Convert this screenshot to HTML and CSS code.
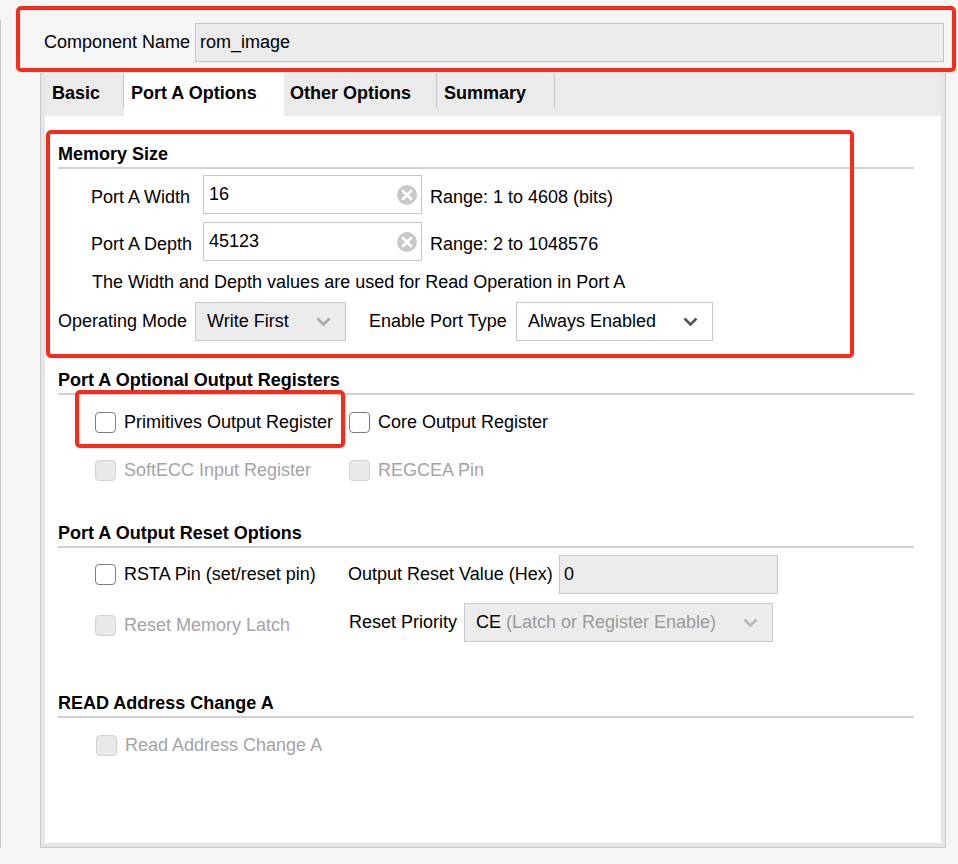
FILE: index.html
```html
<!DOCTYPE html>
<html>
<head>
<meta charset="utf-8">
<link rel="stylesheet" href="styles.css">
</head>
<body>
<div class="window">
  <div class="edge"></div>
  <div class="main">
    <div class="name-row">
      <span class="name-label">Component Name</span>
      <div class="name-input">rom_image</div>
    </div>
    <div class="panel">
      <div class="tabs">
        <div class="tab tab-basic">Basic</div>
        <div class="tab tab-porta active">Port A Options</div>
        <div class="tab tab-other">Other Options</div>
        <div class="tab tab-summary">Summary</div>
      </div>
      <div class="content">
        <section class="section memory">
          <div class="annot annot-memory"></div>
          <div class="section-title">Memory Size</div>
          <div class="field-row first">
            <span class="field-label">Port A Width</span>
            <div class="text-input">
              <span>16</span>
              <svg class="clear" width="20" height="20" viewBox="0 0 20 20"><circle cx="10" cy="10" r="10" fill="#c8c8c8"/><path d="M6 6 L14 14 M14 6 L6 14" stroke="#fff" stroke-width="2.6" stroke-linecap="round"/></svg>
            </div>
            <span class="range">Range: 1 to 4608 (bits)</span>
          </div>
          <div class="field-row">
            <span class="field-label">Port A Depth</span>
            <div class="text-input">
              <span>45123</span>
              <svg class="clear" width="20" height="20" viewBox="0 0 20 20"><circle cx="10" cy="10" r="10" fill="#c8c8c8"/><path d="M6 6 L14 14 M14 6 L6 14" stroke="#fff" stroke-width="2.6" stroke-linecap="round"/></svg>
            </div>
            <span class="range">Range: 2 to 1048576</span>
          </div>
          <div class="note">The Width and Depth values are used for Read Operation in Port A</div>
          <div class="mode-row">
            <span class="mode-label">Operating Mode</span>
            <div class="select select-mode">
              <span>Write First</span>
              <svg class="chev" width="15" height="9" viewBox="0 0 15 9"><polyline points="1.5,1.5 7.5,7.5 13.5,1.5" fill="none" stroke="#a9a9a9" stroke-width="2.6"/></svg>
            </div>
            <span class="enable-label">Enable Port Type</span>
            <div class="select select-enable">
              <span>Always Enabled</span>
              <svg class="chev" width="15" height="9" viewBox="0 0 15 9"><polyline points="1.5,1.5 7.5,7.5 13.5,1.5" fill="none" stroke="#555" stroke-width="2.6"/></svg>
            </div>
          </div>
        </section>

        <section class="section registers">
          <div class="section-title">Port A Optional Output Registers</div>
          <div class="check-grid">
            <label class="check prim">
              <span class="annot annot-prim"></span>
              <span class="box"></span><span>Primitives Output Register</span>
            </label>
            <label class="check"><span class="box"></span><span>Core Output Register</span></label>
            <label class="check disabled"><span class="box"></span><span>SoftECC Input Register</span></label>
            <label class="check disabled"><span class="box"></span><span>REGCEA Pin</span></label>
          </div>
        </section>

        <section class="section reset">
          <div class="section-title">Port A Output Reset Options</div>
          <div class="reset-grid">
            <label class="check"><span class="box"></span><span>RSTA Pin (set/reset pin)</span></label>
            <div class="pair">
              <span class="pair-label label-hex">Output Reset Value (Hex)</span>
              <div class="text-input grey hex">0</div>
            </div>
            <label class="check disabled latch"><span class="box"></span><span>Reset Memory Latch</span></label>
            <div class="pair">
              <span class="pair-label label-prio">Reset Priority</span>
              <div class="select select-prio">
                <span>CE <span class="muted">(Latch or Register Enable)</span></span>
                <svg class="chev" width="15" height="9" viewBox="0 0 15 9"><polyline points="1.5,1.5 7.5,7.5 13.5,1.5" fill="none" stroke="#b8b8b8" stroke-width="2.6"/></svg>
              </div>
            </div>
          </div>
        </section>

        <section class="section readaddr">
          <div class="section-title">READ Address Change A</div>
          <div class="read-row">
            <label class="check disabled"><span class="box"></span><span>Read Address Change A</span></label>
          </div>
        </section>
      </div>
    </div>
  </div>
</div>
</body>
</html>
```

FILE: styles.css
```css
* { box-sizing: border-box; }

html, body {
  margin: 0;
  padding: 0;
}

body {
  background: #f5f5f5;
  font-family: "Liberation Sans", Arial, sans-serif;
  font-size: 18px;
  color: #000;
}

.window {
  display: flex;
  width: 958px;
  height: 864px;
  overflow: hidden;
}

.edge {
  flex: none;
  width: 1px;
  height: 828px;
  margin-top: 20px;
  background: #c8c8c8;
}

.main {
  flex: 1;
  padding-top: 6px;
}

/* Component name */
.name-row {
  display: flex;
  align-items: flex-start;
  width: 940px;
  height: 66px;
  margin-left: 15px;
  padding: 13px 8px 0 24px;
  border: 4px solid #fd2a1c;
  border-radius: 5px;
}

.name-label {
  flex: none;
  width: 151px;
  line-height: 39px;
}

.name-input {
  flex: 1;
  height: 39px;
  line-height: 37px;
  padding-left: 4px;
  background: #ececec;
  border: 1px solid #c5c5c5;
}

/* Panel */
.panel {
  width: 906px;
  height: 775px;
  margin-left: 39px;
  margin-top: 1px;
  background: #e6e6e6;
  border: 1px solid #c8c8c8;
  border-top: none;
  padding: 0 4px 4px 4px;
}

.tabs {
  display: flex;
  align-items: flex-start;
  height: 43px;
  background: #ebebeb;
}

.tab {
  flex: none;
  height: 35px;
  padding: 5px 0 0 7px;
  line-height: 30px;
  font-weight: bold;
  border-right: 1px solid #c8c8c8;
  white-space: nowrap;
}

.tab.active {
  height: 43px;
  background: #fff;
  border-right: none;
}

.tab-basic { width: 79px; }
.tab-porta { width: 160px; }
.tab-other { width: 153px; padding-left: 6px; }
.tab-summary { width: 118px; }

.content {
  height: 727px;
  background: #fff;
  padding: 0 27px 0 13px;
}

.section {
  position: relative;
}

.section-title {
  font-weight: bold;
  line-height: 22px;
  padding-bottom: 2px;
  border-bottom: 2px solid #d0d0d0;
}

.annot {
  position: absolute;
  border: 4px solid #fd2a1c;
  border-radius: 5px;
  pointer-events: none;
}

/* Memory size */
.memory { padding-top: 27px; }

.annot-memory {
  left: -12px;
  top: 14px;
  width: 808px;
  height: 228px;
}

.field-row {
  display: flex;
  align-items: center;
  height: 39px;
  margin-top: 8px;
  padding-left: 33px;
}

.field-row.first { margin-top: 6px; }

.field-label {
  flex: none;
  width: 112px;
  padding-top: 6px;
}

.text-input {
  display: flex;
  align-items: center;
  width: 219px;
  height: 39px;
  padding-left: 5px;
  background: #fff;
  border: 1px solid #c8c8c8;
}

.text-input .clear {
  margin-left: auto;
  margin-right: 4px;
  flex: none;
}

.range {
  margin-left: 8px;
  padding-top: 6px;
}

.note {
  margin-top: 10px;
  line-height: 22px;
  padding-left: 34px;
}

.mode-row {
  display: flex;
  align-items: center;
  height: 39px;
  margin-top: 9px;
}

.mode-label {
  flex: none;
  width: 137px;
}

.enable-label {
  flex: none;
  width: 147px;
  margin-left: 23px;
}

.select {
  display: flex;
  align-items: center;
  height: 39px;
  padding-left: 11px;
  border: 1px solid #c8c8c8;
  background: #ececec;
  white-space: nowrap;
}

.select .chev {
  flex: none;
  margin-left: auto;
  margin-right: 14px;
}

.select-mode { width: 151px; }
.select-enable { width: 197px; background: #fff; }
.select-prio { width: 309px; }

.muted { color: #9a9a9a; }

/* Checkboxes */
.check {
  position: relative;
  display: flex;
  align-items: center;
  gap: 8px;
  height: 22px;
  white-space: nowrap;
}

.box {
  flex: none;
  width: 21px;
  height: 21px;
  border: 1.6px solid #7c7c7c;
  border-radius: 4px;
  background: #fff;
}

.check.disabled { color: #a4a4a4; }

.check.disabled .box {
  background: #e9e9e9;
  border-color: #d3d3d3;
}

.registers { margin-top: 28px; }

.check-grid {
  display: grid;
  grid-template-columns: 254px auto;
  row-gap: 26px;
  margin-top: 16px;
  padding-left: 37px;
}

.annot-prim {
  left: -20px;
  top: -21px;
  width: 270px;
  height: 58px;
}

/* Reset */
.reset { margin-top: 41px; }

.reset-grid {
  display: grid;
  grid-template-columns: 253px auto;
  grid-template-rows: 39px 39px;
  row-gap: 9px;
  align-items: center;
  margin-top: 7px;
  padding-left: 37px;
}

.latch { margin-top: 5px; }

.pair {
  display: flex;
  align-items: center;
}

.pair-label { flex: none; }
.label-hex { width: 211px; }
.label-prio { width: 116px; padding-left: 1px; }

.text-input.grey {
  background: #ececec;
}

.hex { width: 219px; padding-left: 4px; }

/* Read address */
.readaddr { margin-top: 50px; }

.read-row {
  margin-top: 16px;
  padding-left: 38px;
}
```
